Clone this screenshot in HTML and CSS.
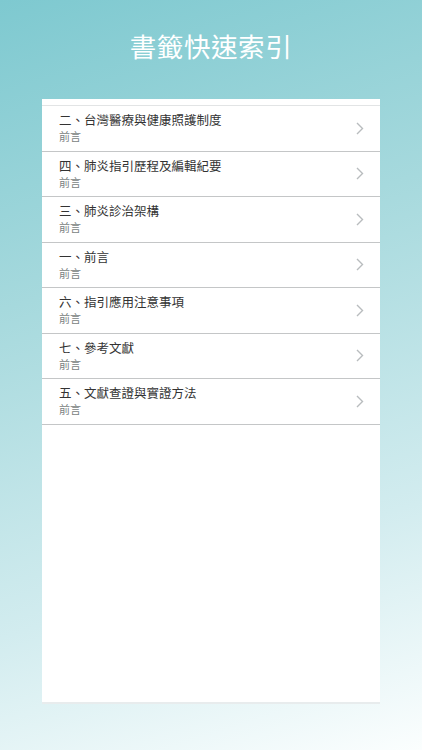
FILE: index.html
```html
<!DOCTYPE html>
<html>
<head>
    <meta charset="UTF-8">
    <title>書籤快速索引</title>

    <link rel="stylesheet" href="styles.css">

</head>

<body>

<div class="page">

    <h1 class="page-title">書籤快速索引</h1>

    <div class="bookmark-panel">

        <ul class="bookmark-list">
            <li class="bookmark-item">
                <div class="bookmark-text">
                    <div class="bookmark-title">二、台灣醫療與健康照護制度</div>
                    <div class="bookmark-sub">前言</div>
                </div>
                <svg class="bookmark-arrow" viewBox="0 0 8 13"><path d="M1 1l5.5 5.5L1 12"/></svg>
            </li>
            <li class="bookmark-item">
                <div class="bookmark-text">
                    <div class="bookmark-title">四、肺炎指引歷程及編輯紀要</div>
                    <div class="bookmark-sub">前言</div>
                </div>
                <svg class="bookmark-arrow" viewBox="0 0 8 13"><path d="M1 1l5.5 5.5L1 12"/></svg>
            </li>
            <li class="bookmark-item">
                <div class="bookmark-text">
                    <div class="bookmark-title">三、肺炎診治架構</div>
                    <div class="bookmark-sub">前言</div>
                </div>
                <svg class="bookmark-arrow" viewBox="0 0 8 13"><path d="M1 1l5.5 5.5L1 12"/></svg>
            </li>
            <li class="bookmark-item">
                <div class="bookmark-text">
                    <div class="bookmark-title">一、前言</div>
                    <div class="bookmark-sub">前言</div>
                </div>
                <svg class="bookmark-arrow" viewBox="0 0 8 13"><path d="M1 1l5.5 5.5L1 12"/></svg>
            </li>
            <li class="bookmark-item">
                <div class="bookmark-text">
                    <div class="bookmark-title">六、指引應用注意事項</div>
                    <div class="bookmark-sub">前言</div>
                </div>
                <svg class="bookmark-arrow" viewBox="0 0 8 13"><path d="M1 1l5.5 5.5L1 12"/></svg>
            </li>
            <li class="bookmark-item">
                <div class="bookmark-text">
                    <div class="bookmark-title">七、參考文獻</div>
                    <div class="bookmark-sub">前言</div>
                </div>
                <svg class="bookmark-arrow" viewBox="0 0 8 13"><path d="M1 1l5.5 5.5L1 12"/></svg>
            </li>
            <li class="bookmark-item">
                <div class="bookmark-text">
                    <div class="bookmark-title">五、文獻查證與實證方法</div>
                    <div class="bookmark-sub">前言</div>
                </div>
                <svg class="bookmark-arrow" viewBox="0 0 8 13"><path d="M1 1l5.5 5.5L1 12"/></svg>
            </li>
        </ul>

    </div>

</div>

</body>
</html>
```

FILE: styles.css
```css
html, body {
    margin: 0;
    padding: 0;
}

body {
    font-family: "Noto Sans", "Noto Sans CJK TC", sans-serif;
    background: linear-gradient(162deg, #7ec9d0 0%, #a6d9dd 35%, #d2ecef 72%, #fbfefe 100%);
    min-height: 750px;
}

.page {
    width: 422px;
    height: 750px;
    overflow: hidden;
}

.page-title {
    margin: 0;
    height: 99px;
    padding-top: 29px;
    box-sizing: border-box;
    text-align: center;
    color: #ffffff;
    font-size: 26.5px;
    font-weight: normal;
    line-height: 36px;
    letter-spacing: 0.6px;
}

.bookmark-panel {
    margin: 0 42px;
    width: 338px;
    height: 605px;
    padding-top: 6px;
    box-sizing: border-box;
    background: #ffffff;
    border-bottom: 2px solid #e8eced;
}

.bookmark-list {
    list-style: none;
    margin: 0;
    padding: 0;
    border-top: 1px solid #e2e4e5;
}

.bookmark-item {
    display: flex;
    align-items: center;
    height: 44.5px;
    padding: 0 16px 0 17px;
    border-bottom: 1px solid #c4c6c7;
}

.bookmark-text {
    flex: 1;
    padding-top: 1px;
}

.bookmark-title {
    font-size: 12.5px;
    line-height: 17px;
    color: #333333;
}

.bookmark-sub {
    font-size: 11px;
    line-height: 16px;
    color: #7a7f82;
}

.bookmark-arrow {
    width: 8px;
    height: 13px;
    fill: none;
    stroke: #b8bcbe;
    stroke-width: 1.4;
}
```
